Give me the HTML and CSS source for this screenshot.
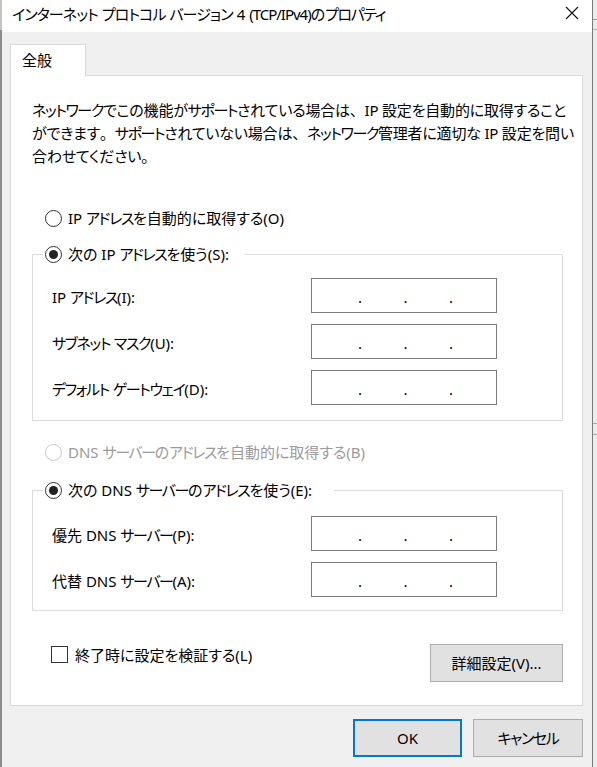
FILE: index.html
```html
<!DOCTYPE html>
<html lang="ja">
<head>
<meta charset="utf-8">
<title>インターネット プロトコル バージョン 4 (TCP/IPv4)のプロパティ</title>
<link rel="stylesheet" href="styles.css">
</head>
<body>
<div class="screen">
  <div class="edge-left"></div>
  <div class="dialog">
    <div class="titlebar">
      <span class="title"><span class="k">インターネット</span> <span class="k">プロトコル</span> <span class="k">バージョン</span>&nbsp;4 <span class="lat">(TCP/IPv4)</span>の<span class="k tail">プロパティ</span></span>
      <svg class="close" width="14" height="14" viewBox="0 0 14 14" aria-hidden="true">
        <path d="M1 1 L13 13 M13 1 L1 13" stroke="#111" stroke-width="1.1" fill="none"/>
      </svg>
    </div>
    <div class="body">
      <div class="tab">全般</div>
      <div class="panel">
        <p class="desc"><span class="k">ネットワーク</span>でこの機能が<span class="k">サポート</span>されている場合は<span class="p">、</span>IP 設定を自動的に取得すること<br>ができます<span class="p">。</span><span class="k">サポート</span>されていない場合は<span class="p">、</span><span class="k">ネットワーク</span>管理者に適切な IP 設定を問い<br>合わせてください<span class="p">。</span></p>

        <div class="radio standalone r-auto-ip"><span class="circle"></span><span>IP <span class="k">アドレス</span>を自動的に取得する(O)</span></div>

        <fieldset class="group g-ip">
          <legend class="radio"><span class="circle on"></span><span>次の IP <span class="k">アドレス</span>を使う(S):</span></legend>
          <div class="fields">
            <span class="label">IP <span class="k">アドレス</span>(I):</span>
            <div class="ipbox"><span class="dot">.</span><span class="dot">.</span><span class="dot">.</span></div>
            <span class="label"><span class="k">サブネット</span> <span class="k">マスク</span>(U):</span>
            <div class="ipbox"><span class="dot">.</span><span class="dot">.</span><span class="dot">.</span></div>
            <span class="label"><span class="k">デフォルト</span> <span class="k">ゲートウェイ</span>(D):</span>
            <div class="ipbox"><span class="dot">.</span><span class="dot">.</span><span class="dot">.</span></div>
          </div>
        </fieldset>

        <div class="radio standalone disabled r-auto-dns"><span class="circle"></span><span>DNS <span class="k">サーバー</span>の<span class="k">アドレス</span>を自動的に取得する(B)</span></div>

        <fieldset class="group g-dns">
          <legend class="radio"><span class="circle on"></span><span>次の DNS <span class="k">サーバー</span>の<span class="k">アドレス</span>を使う(E):</span></legend>
          <div class="fields">
            <span class="label">優先 DNS <span class="k">サーバー</span>(P):</span>
            <div class="ipbox"><span class="dot">.</span><span class="dot">.</span><span class="dot">.</span></div>
            <span class="label">代替 DNS <span class="k">サーバー</span>(A):</span>
            <div class="ipbox"><span class="dot">.</span><span class="dot">.</span><span class="dot">.</span></div>
          </div>
        </fieldset>

        <div class="bottom-row">
          <div class="check"><span class="box"></span><span>終了時に設定を検証する(L)</span></div>
          <button class="btn btn-advanced">詳細設定(V)...</button>
        </div>
      </div>
      <div class="footer">
        <button class="btn btn-ok">OK</button>
        <button class="btn btn-cancel"><span class="k">キャンセル</span></button>
      </div>
    </div>
  </div>
  <div class="edge-right"></div>
</div>
</body>
</html>
```
FILE: styles.css
```css
* { box-sizing: border-box; }

html, body {
  margin: 0;
  padding: 0;
  width: 597px;
  height: 767px;
  overflow: hidden;
  background: #f0f0f0;
}

body {
  font-family: "Noto Sans", "Noto Sans CJK JP", sans-serif;
  font-size: 15px;
  color: #000;
  font-feature-settings: "palt" 1;
}

/* katakana runs: narrow kana like Yu Gothic UI */
.k { letter-spacing: -1.4px; }
/* full-width punctuation */
.p { font-feature-settings: normal; }

.screen {
  display: flex;
  width: 597px;
  height: 767px;
}

.edge-left {
  width: 2px;
  flex: none;
  background: linear-gradient(to bottom, #c4c4c4 0, #c4c4c4 30px, #8c8c8c 30px, #8c8c8c 100%);
}

.dialog {
  width: 590px;
  flex: none;
  display: flex;
  flex-direction: column;
  background: #f0f0f0;
}

.edge-right {
  flex: 1;
  border-left: 1px solid #7a7a7a;
  background:
    linear-gradient(to bottom, transparent 19px, #9c9c9c 19px, #9c9c9c 20px, transparent 20px, transparent 29px, #b4b4b4 29px, #b4b4b4 30px, transparent 30px,
      transparent 423px, #a8a8a8 423px, #a8a8a8 424px, transparent 424px, transparent 434px, #a8a8a8 434px, #a8a8a8 435px, transparent 435px),
    #ececec;
}

/* Title bar */
.titlebar {
  height: 32px;
  background: #fff;
  display: flex;
  align-items: center;
  padding-left: 10px;
  padding-right: 13px;
}

.title {
  flex: 1;
  white-space: nowrap;
  line-height: 20px;
  margin-top: -5px;
}

.title .k { letter-spacing: -0.9px; }
.title .k.tail { letter-spacing: -1.4px; }
.title .lat { letter-spacing: -1px; }

.close {
  display: block;
  margin-top: -6px;
}

/* Body */
.body {
  padding: 12px 9px 0 8px;
  display: flex;
  flex-direction: column;
}

.tab {
  position: relative;
  z-index: 1;
  width: 76px;
  height: 32px;
  margin-bottom: -1px;
  background: #fff;
  border: 1px solid #d9d9d9;
  border-bottom: none;
  padding-left: 11px;
  line-height: 30px;
}

.panel {
  height: 631px;
  background: #fff;
  border: 1px solid #d9d9d9;
  padding: 23px 0 0 21px;
}

.desc {
  margin: 0;
  line-height: 23px;
  white-space: nowrap;
  letter-spacing: -0.2px;
}

/* Radios */
.radio {
  display: flex;
  align-items: center;
  height: 24px;
  line-height: 24px;
  white-space: nowrap;
}

.radio .circle {
  width: 17px;
  height: 17px;
  border: 1px solid #333;
  border-radius: 50%;
  background: #fff;
  margin-right: 6px;
  flex: none;
  display: flex;
  align-items: center;
  justify-content: center;
}

.radio .circle.on::after {
  content: "";
  width: 9px;
  height: 9px;
  border-radius: 50%;
  background: #222;
}

.radio.disabled { color: #9b9b9b; }
.radio.disabled .circle { border-color: #c6c6c6; }

.standalone { margin-left: 13px; }
.r-auto-ip { margin-top: 38px; }
.r-auto-dns { margin-top: 19px; }

/* Group boxes */
.group {
  width: 531px;
  margin: 0;
  border: 1px solid #dcdcdc;
  padding: 12px 0 15px 19px;
  min-width: 0;
}

.group legend {
  margin-left: -9px;
  padding: 0 15px 0 2px;
}

.g-ip { margin-top: 12px; }
.g-dns { margin-top: 14px; padding-top: 14px; padding-bottom: 13px; }
.g-dns legend { padding-right: 22px; }

.fields {
  display: grid;
  grid-template-columns: 259px 186px;
  row-gap: 11px;
  align-items: center;
}

.label {
  white-space: nowrap;
  line-height: 24px;
  padding-top: 3px;
}

.ipbox {
  height: 35px;
  border: 1px solid #7a7a7a;
  background: #fff;
  display: flex;
  align-items: center;
  padding-left: 46px;
  gap: 41.5px;
  line-height: 33px;
  padding-top: 4px;
}

.dot {
  width: 4px;
  text-align: center;
}

/* Bottom row */
.bottom-row {
  width: 531px;
  margin-top: 31px;
  display: flex;
  align-items: flex-start;
  justify-content: space-between;
}

.check {
  display: flex;
  align-items: center;
  height: 24px;
  margin-left: 19px;
  white-space: nowrap;
}

.check .box {
  width: 17px;
  height: 17px;
  border: 1px solid #333;
  background: #fff;
  margin-right: 7px;
  flex: none;
}

.btn {
  font: inherit;
  color: #000;
  background: #e1e1e1;
  border: 1px solid #adadad;
  border-radius: 0;
  padding: 0;
  height: 38px;
  line-height: 36px;
  text-align: center;
  white-space: nowrap;
}

.btn-advanced {
  width: 133px;
  margin-top: 2px;
}

.footer {
  display: flex;
  justify-content: flex-end;
  gap: 11px;
  margin-top: 13px;
}

.btn-ok {
  width: 109px;
  border: 2px solid #0078d7;
  line-height: 34px;
}

.btn-cancel { width: 110px; }
```
